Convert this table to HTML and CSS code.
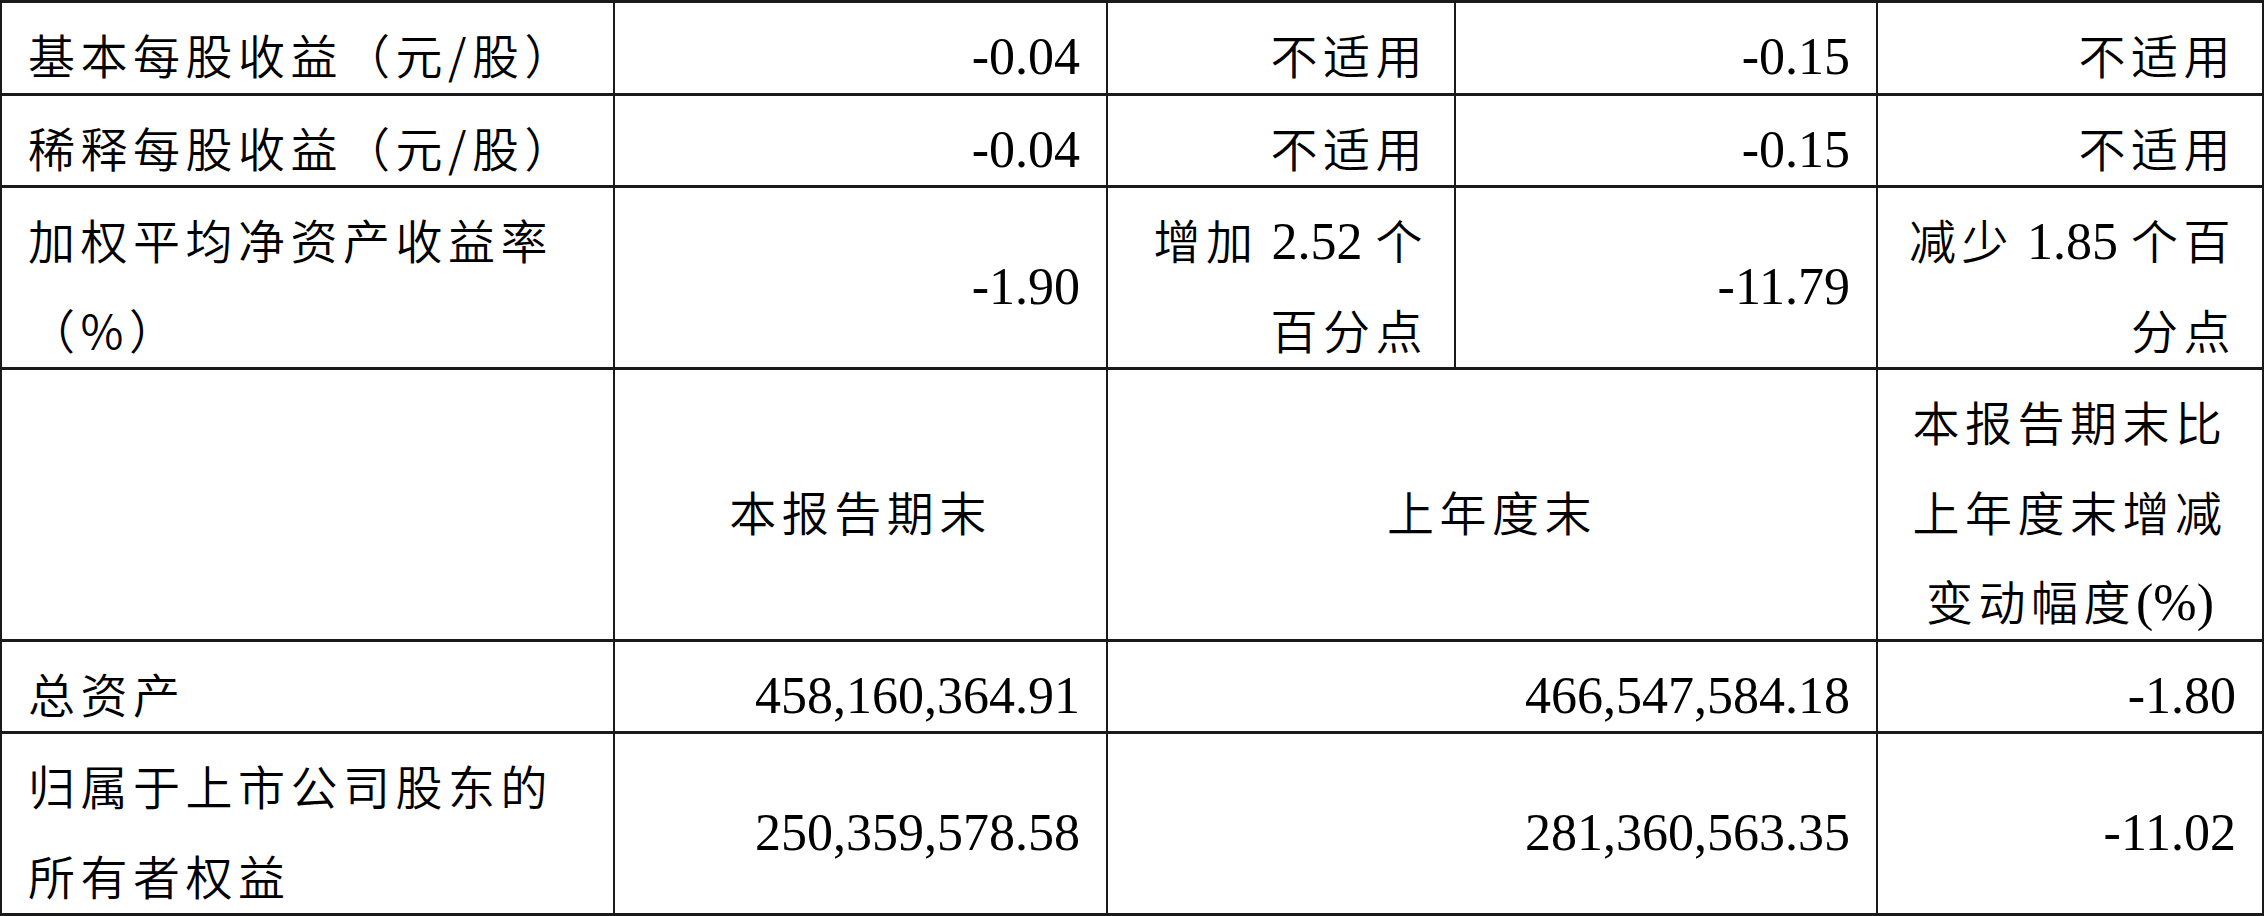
FILE: index.html
```html
<!DOCTYPE html>
<html lang="zh-CN">
<head>
<meta charset="utf-8">
<title>主要会计数据和财务指标</title>
<link rel="stylesheet" href="styles.css">
</head>
<body>
<table class="fin">
  <colgroup>
    <col class="c1"><col class="c2"><col class="c3"><col class="c4"><col class="c5">
  </colgroup>
  <tbody>
    <tr>
      <td><span class="t">基本每股收益（元/股）</span></td>
      <td class="r"><span class="n">-0.04</span></td>
      <td class="r"><span class="t">不适用</span></td>
      <td class="r"><span class="n">-0.15</span></td>
      <td class="r"><span class="t">不适用</span></td>
    </tr>
    <tr>
      <td><span class="t">稀释每股收益（元/股）</span></td>
      <td class="r"><span class="n">-0.04</span></td>
      <td class="r"><span class="t">不适用</span></td>
      <td class="r"><span class="n">-0.15</span></td>
      <td class="r"><span class="t">不适用</span></td>
    </tr>
    <tr>
      <td><span class="t">加权平均净资产收益率<br>（%）</span></td>
      <td class="r"><span class="n">-1.90</span></td>
      <td class="r"><span class="t">增加<span class="n"> 2.52 </span>个<br>百分点</span></td>
      <td class="r"><span class="n">-11.79</span></td>
      <td class="r"><span class="t">减少<span class="n"> 1.85 </span>个百<br>分点</span></td>
    </tr>
    <tr>
      <td></td>
      <td class="c"><span class="t">本报告期末</span></td>
      <td class="c" colspan="2"><span class="t">上年度末</span></td>
      <td class="c"><span class="t">本报告期末比<br>上年度末增减<br>变动幅度<span class="n">(%)</span></span></td>
    </tr>
    <tr>
      <td><span class="t">总资产</span></td>
      <td class="r"><span class="n">458,160,364.91</span></td>
      <td class="r" colspan="2"><span class="n">466,547,584.18</span></td>
      <td class="r"><span class="n">-1.80</span></td>
    </tr>
    <tr>
      <td><span class="t">归属于上市公司股东的<br>所有者权益</span></td>
      <td class="r"><span class="n">250,359,578.58</span></td>
      <td class="r" colspan="2"><span class="n">281,360,563.35</span></td>
      <td class="r"><span class="n">-11.02</span></td>
    </tr>
  </tbody>
</table>
</body>
</html>
```

FILE: styles.css
```css
html, body {
  margin: 0;
  padding: 0;
  background: #ffffff;
}

.fin {
  border-collapse: collapse;
  table-layout: fixed;
  width: 2262px;
}

.c1 { width: 613px; }
.c2 { width: 493px; }
.c3 { width: 348px; }
.c4 { width: 422px; }
.c5 { width: 386px; }

.fin td {
  border-style: solid;
  border-color: #1a1a1a;
  border-width: 3px 2px;
  padding: 0 26px;
  font-family: "Noto Sans CJK SC", sans-serif;
  font-size: 60px;
  line-height: 89.5px;
  color: #000000;
  vertical-align: middle;
  white-space: nowrap;
  text-align: left;
}

.fin td.r { text-align: right; }
.fin td.c { text-align: center; }

.t {
  font-family: "Noto Sans CJK SC", sans-serif;
  font-size: 47px;
  font-weight: 350;
  line-height: 60px;
  letter-spacing: 5.5px;
}

.n {
  font-family: "Liberation Serif", "Times New Roman", serif;
  font-size: 52px;
  font-weight: 400;
  line-height: 60px;
  letter-spacing: 0;
}
```
